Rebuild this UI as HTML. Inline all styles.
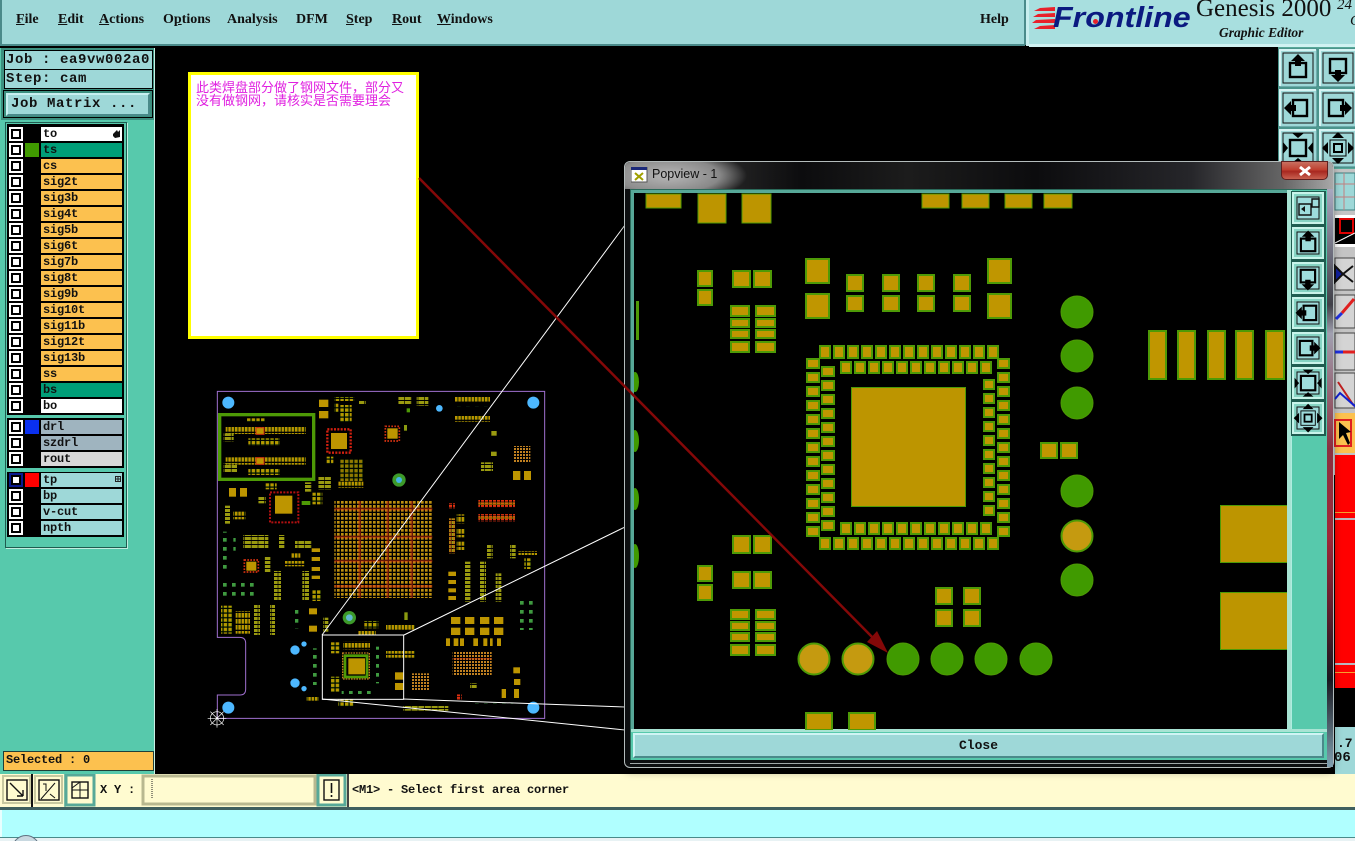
<!DOCTYPE html>
<html style="overflow:hidden;height:841px"><head><meta charset="utf-8"><title>Genesis 2000</title>
<style>
html,body{margin:0;padding:0;background:#000}
body{position:relative;width:1355px;height:841px;overflow:hidden;font-family:"Liberation Mono",monospace}
div,span,svg{position:absolute}
span.u{position:static;text-decoration:underline}
.m{top:12px;font:bold 14px/16px "Liberation Serif",serif;color:#111;white-space:nowrap}
.mono{font:bold 14px/19px "Liberation Mono",monospace;letter-spacing:.6px;color:#111;white-space:pre}
.c{left:9px;width:14px;height:14px;background:#fff}
.c:after{content:"";position:absolute;left:2px;top:2px;width:6px;height:6px;border:2px solid #000;background:#fff}
.s{left:25px;width:14px;height:14px}
.n{left:41px;width:79px;height:14px;padding-left:2px;font:bold 12px/14px "Liberation Mono",monospace;letter-spacing:-.2px;color:#111;white-space:pre}
.o{background:#fcc14f}
.t{background:#9ed8d8}
.g{background:#9fb4bf}
.p{fill:#c09600;stroke:#4e9a06;stroke-width:2}
.q{fill:#bd9500;stroke:#4e9a06;stroke-width:1}
.d{fill:#409a00;stroke:#4e9a06}
.e{fill:#c59a10;stroke:#4e9a06;stroke-width:2}
</style></head><body>

<!-- menu bar -->
<div style="left:0;top:0;width:1025px;height:44px;background:#9ed8d8;border-bottom:2px solid #4a8a8a"></div>
<div style="left:0;top:0;width:2px;height:44px;background:#4a8a8a"></div>
<div style="left:1024px;top:0;width:2px;height:45px;background:#4a8a8a"></div>
<div style="left:1026px;top:0;width:3px;height:46px;background:#c8eeee"></div>
<div style="left:1029px;top:0;width:326px;height:44px;background:#a8dfdf;border-bottom:3px solid #d0f2f2"></div>
<div class="m" style="left:16px"><span class="u">F</span>ile</div>
<div class="m" style="left:58px"><span class="u">E</span>dit</div>
<div class="m" style="left:99px"><span class="u">A</span>ctions</div>
<div class="m" style="left:163px">O<span class="u">p</span>tions</div>
<div class="m" style="left:227px">Analysis</div>
<div class="m" style="left:296px">DFM</div>
<div class="m" style="left:346px"><span class="u">S</span>tep</div>
<div class="m" style="left:392px"><span class="u">R</span>out</div>
<div class="m" style="left:437px"><span class="u">W</span>indows</div>
<div class="m" style="left:980px">Help</div>

<!-- logo -->
<svg style="left:1032px;top:5px" width="24" height="26"><g fill="#e8202a"><polygon points="8,3 23,2 23,6 2,6"/><polygon points="6,9 23,8 23,12 1,12"/><polygon points="4,15 23,14 23,18 0,18"/><polygon points="8,21 23,20 23,24 2,24"/></g></svg>
<div style="left:1053px;top:0;font:italic bold 29px/37px 'Liberation Sans',sans-serif;color:#0b1a80;white-space:nowrap;transform:scaleX(1.11);transform-origin:0 0">Frontline</div>
<div style="left:1093px;top:19px;width:5px;height:5px;background:#e8202a;border-radius:50%"></div>
<div style="left:1196px;top:-5px;font:25px/28px 'Liberation Serif',serif;color:#111;white-space:nowrap">Genesis 2000</div>
<div style="left:1337px;top:-3px;font:italic 15px/16px 'Liberation Serif',serif;color:#111">24</div>
<div style="left:1350px;top:13px;font:italic 15px/16px 'Liberation Serif',serif;color:#111">C</div>
<div style="left:1219px;top:25px;font:italic bold 13.5px/16px 'Liberation Serif',serif;color:#111;white-space:nowrap">Graphic Editor</div>

<!-- left panel -->
<div style="left:0;top:48px;width:154px;height:726px;background:#57c9ac;border-right:1px solid #c8f0e4"></div>
<div style="left:1px;top:48px;width:153px;height:72px;background:#3c8f7f"></div>
<div class="mono t" style="left:4px;top:50px;width:146px;height:18px;border:1px solid #000;padding-left:1px">Job : ea9vw002a0</div>
<div class="mono t" style="left:4px;top:69px;width:146px;height:18px;border:1px solid #000;padding-left:1px">Step: cam</div>
<div style="left:3px;top:90px;width:148px;height:26px;background:#3c8f7f;border:1px solid #000"></div>
<div class="mono t" style="left:6px;top:93px;width:137px;height:19px;line-height:18px;padding-left:3px;border:2px solid;border-color:#c8f0f0 #4a8a8a #4a8a8a #c8f0f0">Job Matrix ...</div>

<!-- layers list -->
<div style="left:5px;top:122px;width:120px;height:424px;background:#57c9ac;border:1px solid #1f5c50;box-shadow:1px 1px 0 #c0eee0"></div>
<div style="left:7px;top:124px;width:117px;height:291px;background:#000"></div>
<div style="left:7px;top:418px;width:117px;height:50px;background:#000"></div>
<div style="left:7px;top:472px;width:117px;height:65px;background:#000"></div>

<div class="c" style="top:127px"></div><div class="n" style="top:127px;background:#fff">to</div>
<svg style="left:112px;top:129px" width="9" height="10"><polygon points="1,5 5,1 6,3 8,1 8,8 3,9 1,7" fill="#111"/></svg>
<div class="c" style="top:143px"></div><div class="s" style="top:143px;background:#409a00"></div><div class="n" style="top:143px;background:#009e78">ts</div>
<div class="c" style="top:159px"></div><div class="n o" style="top:159px">cs</div>
<div class="c" style="top:175px"></div><div class="n o" style="top:175px">sig2t</div>
<div class="c" style="top:191px"></div><div class="n o" style="top:191px">sig3b</div>
<div class="c" style="top:207px"></div><div class="n o" style="top:207px">sig4t</div>
<div class="c" style="top:223px"></div><div class="n o" style="top:223px">sig5b</div>
<div class="c" style="top:239px"></div><div class="n o" style="top:239px">sig6t</div>
<div class="c" style="top:255px"></div><div class="n o" style="top:255px">sig7b</div>
<div class="c" style="top:271px"></div><div class="n o" style="top:271px">sig8t</div>
<div class="c" style="top:287px"></div><div class="n o" style="top:287px">sig9b</div>
<div class="c" style="top:303px"></div><div class="n o" style="top:303px">sig10t</div>
<div class="c" style="top:319px"></div><div class="n o" style="top:319px">sig11b</div>
<div class="c" style="top:335px"></div><div class="n o" style="top:335px">sig12t</div>
<div class="c" style="top:351px"></div><div class="n o" style="top:351px">sig13b</div>
<div class="c" style="top:367px"></div><div class="n o" style="top:367px">ss</div>
<div class="c" style="top:383px"></div><div class="n" style="top:383px;background:#009e78">bs</div>
<div class="c" style="top:399px"></div><div class="n" style="top:399px;background:#fff">bo</div>

<div class="c" style="top:420px"></div><div class="s" style="top:420px;background:#0a30f0"></div><div class="n g" style="top:420px">drl</div>
<div class="c" style="top:436px"></div><div class="n g" style="top:436px">szdrl</div>
<div class="c" style="top:452px"></div><div class="n" style="top:452px;background:#d8d8d8">rout</div>

<div class="c" style="top:473px;background:#0a1a90"></div><div class="s" style="top:473px;background:#f00"></div><div class="n t" style="top:473px">tp</div>
<svg style="left:115px;top:476px" width="7" height="7"><rect x=".5" y=".5" width="5" height="5" fill="none" stroke="#222"/><path d="M3 0v6M0 3h6" stroke="#222"/></svg>
<div class="c" style="top:489px"></div><div class="n t" style="top:489px">bp</div>
<div class="c" style="top:505px"></div><div class="n t" style="top:505px">v-cut</div>
<div class="c" style="top:521px"></div><div class="n t" style="top:521px">npth</div>

<div style="left:3px;top:751px;width:147px;height:18px;background:#fcc14f;border:1px solid #1f3f38;font:bold 12px/17px 'Liberation Mono',monospace;letter-spacing:-.2px;color:#111;padding-left:2px;white-space:pre">Selected : 0</div>

<!-- top-right toolbar -->
<svg style="left:1278px;top:47px" width="77" height="428" viewBox="0 0 77 428">
<defs>
<g id="b"><rect x="0" y="0" width="38" height="38" fill="#9ed8d8" stroke="#3f7f7f"/><path d="M1 37V1H37" fill="none" stroke="#d6f4f4" stroke-width="2"/><rect x="4" y="4" width="30" height="30" fill="none" stroke="#111"/></g>
<g id="up"><rect x="11" y="14" width="16" height="14" fill="none" stroke="#000" stroke-width="2.4"/><polygon points="19,5 26,12 22,12 22,17 16,17 16,12 12,12" fill="#000"/></g>
<g id="in"><rect x="11" y="11" width="16" height="16" fill="none" stroke="#000" stroke-width="2.4"/><path d="M13 4h12l-6 5zM13 34h12l-6-5zM4 13v12l5-6zM34 13v12l-5-6z" fill="#000"/></g>
<g id="out"><rect x="15" y="15" width="8" height="8" fill="none" stroke="#000" stroke-width="2"/><rect x="11" y="11" width="16" height="16" fill="none" stroke="#000"/><path d="M19 3l6 6H13zM19 35l6-6H13zM3 19l6-6v12zM35 19l-6-6v12z" fill="#000"/></g>
</defs>
<rect x="0" y="0" width="77" height="428" fill="#57a898"/>
<use href="#b" x="1" y="2"/><use href="#up" x="1" y="2"/>
<use href="#b" x="41" y="2"/><use href="#up" transform="translate(41,2) rotate(180 19 19)"/>
<use href="#b" x="1" y="42"/><use href="#up" transform="translate(1,42) rotate(-90 19 19)"/>
<use href="#b" x="41" y="42"/><use href="#up" transform="translate(41,42) rotate(90 19 19)"/>
<use href="#b" x="1" y="82"/><use href="#in" x="1" y="82"/>
<use href="#b" x="41" y="82"/><use href="#out" x="41" y="82"/>
<rect x="1" y="122" width="76" height="306" fill="#c4c4c4"/>
<rect x="57" y="126" width="20" height="37" fill="#9ed8d8" stroke="#3f7f7f"/><path d="M57 137h20M57 150h20M66 126v37" stroke="#c08080"/>
<rect x="57" y="168" width="20" height="32" fill="#fff"/><rect x="57" y="171" width="20" height="26" fill="#000"/><rect x="62" y="172" width="13" height="14" fill="none" stroke="#e00000" stroke-width="2"/><path d="M57 196l20-10" stroke="#fff"/>
<rect x="57" y="211" width="20" height="32" fill="#d4d4d4" stroke="#444"/><path d="M57 219l8 8-8 8zM65 227l10-8M65 227l10 8" fill="#1020a0" stroke="#111" stroke-width="2"/>
<rect x="57" y="248" width="20" height="33" fill="#d4d4d4" stroke="#444"/><path d="M58 272l6-6" stroke="#2030e0" stroke-width="3"/><path d="M64 266l12-14" stroke="#e02020" stroke-width="3"/>
<rect x="57" y="286" width="20" height="37" fill="#d4d4d4" stroke="#444"/><path d="M57 305h8" stroke="#2030e0" stroke-width="3"/><path d="M65 305h12" stroke="#e02020" stroke-width="3"/>
<rect x="57" y="326" width="20" height="35" fill="#d4d4d4" stroke="#444"/><path d="M60 335l16 24" stroke="#c02020" stroke-width="2" fill="none"/><path d="M57 352l5-6 16 14" stroke="#1020d0" stroke-width="2" fill="none"/>
<rect x="57" y="366" width="20" height="40" fill="#fcc14f"/><rect x="57" y="373" width="16" height="26" fill="none" stroke="#e02020" stroke-width="2"/><polygon points="61,375 61,392 65,388 70,398 72,396 68,386 73,385" fill="#000"/>
<rect x="57" y="408" width="20" height="20" fill="#f00"/>
</svg>
<div style="left:1335px;top:475px;width:20px;height:213px;background:#f00"></div>
<div style="left:1335px;top:512px;width:20px;height:1px;background:#f5a030"></div>
<div style="left:1335px;top:518px;width:20px;height:2px;background:#b8b8c0"></div>
<div style="left:1335px;top:663px;width:20px;height:2px;background:#b8b8c0"></div>
<div style="left:1335px;top:672px;width:20px;height:1px;background:#f5a030"></div>
<div style="left:1335px;top:727px;width:20px;height:47px;background:#9ed8d8"></div>
<div style="left:1337px;top:736px;font:bold 13px/15px 'Liberation Mono',monospace;color:#111">.7</div>
<div style="left:1334px;top:750px;font:bold 14px/16px 'Liberation Mono',monospace;color:#111">06</div>

<!-- bottom bars -->
<div style="left:0;top:774px;width:1355px;height:33px;background:#fffbd0"></div>
<svg style="left:0;top:774px" width="352" height="33" viewBox="0 0 352 33">
<rect x="31" y="0" width="2" height="33" fill="#111"/><rect x="64" y="0" width="2" height="33" fill="#9ed0b0"/>
<rect x="3" y="2" width="27" height="27" fill="none" stroke="#c8c8a0" stroke-width="2"/><rect x="7" y="6" width="20" height="20" fill="none" stroke="#111" stroke-width="1.4"/><path d="M10 9l13 13M23 22v-6M23 22h-6" stroke="#111" stroke-width="1.4" fill="none"/>
<rect x="35" y="2" width="27" height="27" fill="none" stroke="#c8c8a0" stroke-width="2"/><rect x="39" y="6" width="20" height="20" fill="none" stroke="#111" stroke-width="1.4"/><path d="M41 25l14-16M43 10h3v7M50 20l5 4" stroke="#111" fill="none"/>
<rect x="66" y="1" width="28" height="30" fill="#fffbd0" stroke="#57a898" stroke-width="3"/><rect x="72" y="8" width="16" height="16" fill="none" stroke="#111" stroke-width="1.4"/><path d="M72 16h16M80 8v16M72 14l8-6" stroke="#111" fill="none"/>
<rect x="143" y="2" width="172" height="28" fill="#fffbd0" stroke="#b8b890" stroke-width="3"/>
<path d="M152 5v20" stroke="#222" stroke-dasharray="1 1"/>
<rect x="318" y="1" width="27" height="30" fill="#fffbd0" stroke="#57a898" stroke-width="3"/><rect x="324" y="6" width="15" height="20" fill="none" stroke="#111" stroke-width="1.4"/><path d="M331.5 9v10M331.5 21v2" stroke="#111" stroke-width="1.6"/>
<rect x="347" y="0" width="2" height="33" fill="#444"/>
</svg>
<div class="n" style="left:98px;top:783px;width:40px;background:none;font-size:12px">X Y :</div>
<div class="n" style="left:350px;top:783px;width:300px;background:none;font-size:12px">&lt;M1&gt; - Select first area corner</div>
<div style="left:0;top:807px;width:1355px;height:3px;background:#3f5f5f"></div>
<div style="left:0;top:810px;width:1355px;height:27px;background:#b0ffff;border-bottom:1px solid #4a8a8a"></div>
<div style="left:0;top:810px;width:2px;height:27px;background:#e8ffff"></div>
<div style="left:0;top:838px;width:1355px;height:3px;background:#e8f2f4;overflow:hidden"></div>
<div style="left:0;top:835px;width:60px;height:6px;overflow:hidden"><div style="left:12px;top:0;width:28px;height:28px;border-radius:50%;background:#c8d8e0;border:1px solid #607080;box-sizing:border-box"></div></div>

<!-- sticky note -->
<div style="left:188px;top:72px;width:225px;height:261px;background:#fff;border:3px solid #ff0"></div>
<div style="left:196px;top:80px;width:216px;font:13px/13px 'Noto Sans CJK SC','WenQuanYi Zen Hei',sans-serif;color:#e020e0">此类焊盘部分做了钢网文件，部分又<br>没有做钢网，请核实是否需要理会</div>

<!-- board -->
<svg style="left:205px;top:385px" width="350" height="345" viewBox="0 0 1050 1035">
<defs>
<pattern id="a" width="14" height="14" patternUnits="userSpaceOnUse"><rect width="10" height="10" fill="#bd9500" stroke="#4e9a06" stroke-width="1"/></pattern>
<pattern id="h" width="10" height="18" patternUnits="userSpaceOnUse"><rect width="7" height="14" fill="#bd9500"/><rect x="7" width="1" height="14" fill="#4e9a06"/></pattern>
<pattern id="v" width="20" height="12" patternUnits="userSpaceOnUse"><rect width="18" height="9" fill="#9a9a10"/></pattern>
<pattern id="k" width="27" height="27" patternUnits="userSpaceOnUse"><rect width="11" height="11" fill="#3f9a40"/></pattern>
<pattern id="n" width="12" height="12" patternUnits="userSpaceOnUse"><rect width="8" height="8" fill="#bd8f10"/></pattern>
<pattern id="r" width="12" height="8" patternUnits="userSpaceOnUse"><rect width="9" height="6" fill="#e03010"/></pattern>
<pattern id="z" width="9" height="9" patternUnits="userSpaceOnUse"><rect width="6" height="6" fill="#c08020"/></pattern>
</defs>
<path d="M37 19H1019V1000H37V930H105Q122 930 122 912V775Q122 757 104 757H37Z" fill="none" stroke="#a070d0" stroke-width="3"/>
<g fill="#4db8ff"><circle cx="70" cy="53" r="18"/><circle cx="985" cy="53" r="18"/><circle cx="70" cy="968" r="18"/><circle cx="985" cy="968" r="18"/><circle cx="703" cy="70" r="10"/><circle cx="270" cy="795" r="14"/><circle cx="297" cy="777" r="8"/><circle cx="270" cy="894" r="14"/><circle cx="297" cy="911" r="8"/></g>
<rect x="44" y="89" width="282" height="194" fill="none" stroke="#4e9a06" stroke-width="10"/>
<g>
<rect x="62" y="125" width="240" height="22" fill="url(#h)"/><rect x="125" y="100" width="55" height="10" fill="url(#a)"/><rect x="130" y="160" width="95" height="22" fill="url(#a)"/><rect x="56" y="145" width="30" height="24" fill="url(#v)"/>
<rect x="62" y="217" width="240" height="22" fill="url(#h)"/><rect x="130" y="250" width="95" height="20" fill="url(#a)"/><rect x="56" y="235" width="40" height="28" fill="url(#v)"/>
<rect x="153" y="128" width="24" height="20" fill="#bd9500" stroke="#d03010" stroke-width="3"/><rect x="153" y="218" width="24" height="20" fill="#bd9500" stroke="#d03010" stroke-width="3"/>
</g>
<rect x="367" y="133" width="70" height="70" fill="none" stroke="#d02010" stroke-width="7" stroke-dasharray="6 4"/><rect x="378" y="144" width="48" height="48" fill="#bd9500"/>
<rect x="195" y="322" width="85" height="90" fill="none" stroke="#b01010" stroke-width="6" stroke-dasharray="6 4"/><rect x="210" y="332" width="52" height="54" fill="#bd9500"/>
<rect x="541" y="124" width="42" height="44" fill="none" stroke="#d03010" stroke-width="5" stroke-dasharray="5 4"/><rect x="547" y="130" width="31" height="31" fill="#bd9500"/>
<rect x="118" y="525" width="42" height="36" fill="none" stroke="#d03010" stroke-width="5" stroke-dasharray="5 4"/><rect x="124" y="530" width="30" height="27" fill="#bd9500"/>
<rect x="388" y="348" width="294" height="291" fill="url(#n)"/>
<g fill="#e03010" opacity=".45"><rect x="388" y="368" width="294" height="8"/><rect x="388" y="452" width="294" height="8"/><rect x="388" y="524" width="294" height="8"/><rect x="388" y="600" width="294" height="8"/><rect x="460" y="348" width="8" height="291"/><rect x="544" y="348" width="8" height="291"/><rect x="616" y="348" width="8" height="291"/></g>
<circle cx="582" cy="285" r="20" fill="#3d9a2a"/><circle cx="582" cy="285" r="9" fill="#45b4e8"/><circle cx="433" cy="698" r="20" fill="#3d9a2a"/><circle cx="433" cy="698" r="10" fill="#60b8d0"/>
<g fill="#bd9500">
<rect x="342" y="44" width="28" height="22"/><rect x="342" y="78" width="28" height="22"/><rect x="72" y="309" width="21" height="26"/><rect x="105" y="309" width="21" height="26"/><rect x="924" y="258" width="22" height="27"/><rect x="957" y="258" width="21" height="27"/><rect x="312" y="670" width="24" height="18"/><rect x="312" y="722" width="24" height="18"/><rect x="320" y="490" width="25" height="11"/><rect x="320" y="516" width="25" height="12"/><rect x="320" y="546" width="25" height="12"/><rect x="320" y="572" width="25" height="10"/><rect x="730" y="560" width="23" height="13"/><rect x="730" y="585" width="23" height="12"/><rect x="730" y="610" width="23" height="12"/><rect x="730" y="633" width="23" height="12"/><rect x="570" y="862" width="25" height="22"/><rect x="570" y="894" width="25" height="21"/><rect x="925" y="847" width="20" height="18"/><rect x="927" y="882" width="19" height="18"/><rect x="890" y="912" width="13" height="27"/><rect x="927" y="912" width="15" height="27"/>
<rect x="738" y="696" width="28" height="21"/><rect x="780" y="696" width="28" height="21"/><rect x="825" y="696" width="28" height="21"/><rect x="867" y="696" width="28" height="21"/><rect x="738" y="728" width="28" height="22"/><rect x="780" y="728" width="28" height="22"/><rect x="825" y="728" width="28" height="22"/><rect x="867" y="728" width="28" height="22"/>
<rect x="723" y="760" width="12" height="23"/><rect x="746" y="760" width="14" height="23"/><rect x="765" y="760" width="12" height="23"/><rect x="805" y="760" width="14" height="23"/><rect x="835" y="760" width="12" height="23"/><rect x="855" y="760" width="8" height="23"/><rect x="876" y="760" width="12" height="23"/>
<rect x="420" y="812" width="66" height="64" fill="none" stroke="#4e9a06" stroke-width="8"/><rect x="430" y="820" width="50" height="48"/>
</g>
<rect x="413" y="804" width="80" height="78" fill="none" stroke="#c08020" stroke-width="4" stroke-dasharray="5 3"/>
<g>
<rect x="750" y="33" width="105" height="17" fill="url(#h)"/><rect x="750" y="93" width="105" height="17" fill="url(#h)"/>
<rect x="820" y="345" width="110" height="22" fill="url(#r)"/><rect x="820" y="387" width="110" height="22" fill="url(#r)"/><rect x="820" y="352" width="110" height="8" fill="#bd9500" opacity=".5"/><rect x="820" y="394" width="110" height="8" fill="#bd9500" opacity=".5"/>
<rect x="926" y="183" width="50" height="50" fill="url(#z)"/><rect x="743" y="798" width="117" height="74" fill="url(#z)"/><rect x="743" y="820" width="117" height="3" fill="#d03010" opacity=".7"/><rect x="620" y="865" width="52" height="50" fill="url(#z)"/>
<rect x="388" y="36" width="60" height="12" fill="url(#a)"/><rect x="388" y="55" width="12" height="26" fill="url(#a)"/><rect x="405" y="60" width="35" height="50" fill="url(#a)"/><rect x="462" y="45" width="20" height="13" fill="url(#v)"/><rect x="580" y="36" width="40" height="24" fill="url(#v)"/><rect x="635" y="36" width="35" height="26" fill="url(#v)"/><rect x="605" y="70" width="10" height="12" fill="#4e9a06"/><rect x="597" y="120" width="9" height="17" fill="#8a9a10"/>
<rect x="859" y="138" width="16" height="14" fill="#9a9a10"/><rect x="858" y="200" width="17" height="13" fill="#9a9a10"/><rect x="828" y="232" width="36" height="26" fill="url(#v)"/><rect x="750" y="65" width="100" height="12" fill="url(#k)"/>
<rect x="365" y="215" width="20" height="20" fill="url(#a)"/><rect x="405" y="222" width="70" height="66" fill="url(#a)" opacity=".8"/><rect x="400" y="290" width="75" height="18" fill="url(#h)"/><rect x="340" y="275" width="38" height="38" fill="url(#v)"/><rect x="300" y="292" width="20" height="28" fill="url(#v)"/><rect x="322" y="323" width="30" height="35" fill="url(#a)"/><rect x="160" y="335" width="22" height="20" fill="url(#v)"/><rect x="180" y="295" width="35" height="18" fill="url(#a)"/><rect x="290" y="348" width="26" height="12" fill="#4e9a06"/>
<rect x="732" y="355" width="18" height="15" fill="url(#r)"/><rect x="732" y="400" width="18" height="105" fill="url(#v)"/><rect x="732" y="400" width="18" height="105" fill="url(#r)" opacity=".4"/><rect x="755" y="388" width="25" height="27" fill="url(#h)"/><rect x="755" y="430" width="25" height="27" fill="url(#h)"/><rect x="755" y="470" width="25" height="25" fill="url(#h)"/>
<rect x="846" y="480" width="17" height="40" fill="url(#v)"/><rect x="915" y="480" width="17" height="40" fill="url(#v)"/><rect x="940" y="498" width="56" height="12" fill="url(#h)"/><rect x="958" y="520" width="20" height="32" fill="url(#a)"/>
<rect x="780" y="530" width="16" height="120" fill="url(#v)"/><rect x="825" y="530" width="18" height="120" fill="url(#v)"/><rect x="872" y="565" width="17" height="85" fill="url(#v)"/>
<rect x="945" y="635" width="40" height="100" fill="url(#k)"/><rect x="985" y="795" width="14" height="123" fill="url(#k)"/>
<rect x="60" y="362" width="15" height="54" fill="url(#v)"/><rect x="85" y="380" width="36" height="23" fill="url(#h)"/>
<rect x="52" y="440" width="14" height="125" fill="url(#k)"/><rect x="85" y="445" width="15" height="55" fill="url(#k)"/><rect x="115" y="450" width="75" height="40" fill="url(#v)"/><rect x="222" y="450" width="18" height="42" fill="url(#v)"/><rect x="270" y="465" width="50" height="25" fill="url(#v)"/><rect x="240" y="528" width="58" height="16" fill="url(#h)"/><rect x="258" y="505" width="28" height="14" fill="url(#h)"/><rect x="178" y="513" width="18" height="50" fill="url(#v)"/>
<rect x="207" y="558" width="21" height="88" fill="url(#v)"/><rect x="292" y="558" width="20" height="88" fill="url(#v)"/><rect x="322" y="615" width="25" height="33" fill="url(#a)"/>
<rect x="52" y="590" width="100" height="55" fill="url(#k)"/><rect x="48" y="662" width="34" height="84" fill="url(#a)"/><rect x="92" y="678" width="43" height="68" fill="url(#h)"/>
<rect x="147" y="660" width="18" height="90" fill="url(#v)"/><rect x="195" y="660" width="15" height="90" fill="url(#v)"/><rect x="230" y="665" width="11" height="80" fill="url(#k)"/><rect x="268" y="660" width="12" height="70" fill="url(#k)"/>
<rect x="355" y="698" width="15" height="42" fill="url(#v)"/><rect x="543" y="717" width="87" height="20" fill="url(#h)"/><rect x="460" y="738" width="52" height="12" fill="url(#h)"/><rect x="478" y="708" width="42" height="22" fill="url(#a)"/><rect x="598" y="682" width="10" height="23" fill="#8a9a10"/>
<rect x="543" y="798" width="87" height="20" fill="url(#h)"/><rect x="320" y="790" width="32" height="110" fill="url(#k)"/><rect x="375" y="772" width="30" height="33" fill="url(#a)"/><rect x="375" y="875" width="30" height="45" fill="url(#a)"/><rect x="415" y="770" width="80" height="23" fill="url(#h)"/><rect x="500" y="785" width="22" height="110" fill="url(#k)"/>
<rect x="410" y="915" width="95" height="12" fill="url(#k)"/><rect x="305" y="933" width="36" height="14" fill="url(#h)"/><rect x="400" y="942" width="45" height="23" fill="url(#a)"/>
<rect x="595" y="963" width="135" height="14" fill="url(#v)"/><rect x="800" y="955" width="125" height="15" fill="url(#k)"/><rect x="795" y="895" width="20" height="16" fill="url(#v)"/><rect x="753" y="928" width="17" height="17" fill="url(#r)"/>
</g>
<g stroke="#fff" stroke-width="2" fill="none"><circle cx="36" cy="1000" r="20"/><path d="M8 1000H64M36 972V1028M16 980L56 1020M56 980L16 1020"/></g>
<rect x="352" y="750" width="244" height="193" fill="none" stroke="#fff" stroke-width="3"/>
</svg>

<!-- leader lines -->
<svg style="left:0;top:0" width="640" height="780"><g stroke="#fff" stroke-width="1"><path d="M322 635L625 225M404 635L625 527M403 699L625 707M322 699L625 730"/></g></svg>

<!-- popup window: dark glass frame over black -->
<div style="left:624px;top:161px;width:710px;height:607px;background:#0c0e10;border:1px solid #b4bcbc;border-radius:6px;box-sizing:border-box;box-shadow:0 4px 8px rgba(0,0,0,.35)"></div>
<div style="left:625px;top:162px;width:708px;height:27px;border-radius:5px 5px 0 0;background:radial-gradient(ellipse 78px 26px at 44px 50%,rgba(190,190,190,.95) 0,rgba(160,160,160,.8) 65%,rgba(110,110,110,0) 100%),linear-gradient(90deg,#4a4a4a 0,#2a2a2a 12%,#0c0c0e 25%,#1c1c1c 40%,#0c0c0e 58%,#26262a 80%,#666 93%,#a8a8a8 100%)"></div>
<div style="left:1327px;top:189px;width:6px;height:578px;background:linear-gradient(180deg,#a8a8c0 0,#404048 20%,#a0a0b0 25%,#8a3040 45%,#a02838 60%,#702030 70%,#181820 85%,#80a0b0 100%)"></div>
<div style="left:630px;top:763px;width:697px;height:1px;background:#a0a8a8"></div>
<svg style="left:631px;top:167px" width="17" height="16"><rect width="16" height="15" fill="#fff" stroke="#555"/><rect x="0" y="0" width="16" height="3" fill="#1c2a7a"/><path d="M4 6l8 7M12 6l-8 7" stroke="#a0a000" stroke-width="2"/></svg>
<div style="left:652px;top:167px;font:12.5px/15px 'Liberation Sans',sans-serif;color:#111;white-space:nowrap">Popview - 1</div>
<div style="left:1281px;top:161px;width:47px;height:19px;border-radius:0 0 5px 5px;background:linear-gradient(180deg,#c87060 0,#c04030 45%,#a82820 55%,#c86050 100%);border:1px solid #602020;box-sizing:border-box"></div>
<svg style="left:1298px;top:165px" width="14" height="12"><path d="M2 2l10 8M12 2L2 10" stroke="#fff" stroke-width="3"/></svg>

<div style="left:630px;top:189px;width:697px;height:571px;background:#57a898;border:1px solid #2a6a5a;box-sizing:border-box"></div>
<div style="left:634px;top:193px;width:653px;height:537px;background:#000"></div>
<div style="left:1291px;top:190px;width:36px;height:540px;background:#57c9ac;border-left:1px solid #b0ece0;box-sizing:border-box"></div>
<div style="left:1287px;top:190px;width:4px;height:541px;background:#a8e4d4"></div>
<div style="left:631px;top:729px;width:696px;height:31px;background:#57c9ac;border-top:3px solid #a8e4d4;box-sizing:border-box"></div>
<div style="left:633px;top:733px;width:687px;height:21px;background:#9ed8d8;border:2px solid;border-color:#d0f4f4 #4a8a8a #4a8a8a #d0f4f4;font:bold 13px/21px 'Liberation Mono',monospace;color:#111;text-align:center">Close</div>

<!-- popup pads -->
<svg style="left:634px;top:193px" width="653" height="537" viewBox="634 193 653 537">
<defs>
<pattern id="t1" x="819" y="345" width="14" height="14" patternUnits="userSpaceOnUse"><rect x="1" y="1" width="10" height="12" class="p"/></pattern>
<pattern id="t2" x="840" y="361" width="14" height="14" patternUnits="userSpaceOnUse"><rect x="1" y="1" width="10" height="11" class="p"/></pattern>
<pattern id="t3" x="840" y="522" width="14" height="14" patternUnits="userSpaceOnUse"><rect x="1" y="1" width="10" height="11" class="p"/></pattern>
<pattern id="t4" x="819" y="537" width="14" height="14" patternUnits="userSpaceOnUse"><rect x="1" y="1" width="10" height="11" class="p"/></pattern>
<pattern id="l1" x="806" y="358" width="14" height="14" patternUnits="userSpaceOnUse"><rect x="1" y="1" width="12" height="9" class="p"/></pattern>
<pattern id="l2" x="821" y="366" width="14" height="14" patternUnits="userSpaceOnUse"><rect x="1" y="1" width="12" height="9" class="p"/></pattern>
<pattern id="r1" x="983" y="379" width="14" height="14" patternUnits="userSpaceOnUse"><rect x="1" y="1" width="10" height="9" class="p"/></pattern>
<pattern id="r2" x="997" y="358" width="14" height="14" patternUnits="userSpaceOnUse"><rect x="1" y="1" width="11" height="9" class="p"/></pattern>
</defs>
<g class="q">
<rect x="646" y="194" width="35" height="14"/><rect x="698" y="194" width="28" height="29"/><rect x="742" y="194" width="29" height="29"/>
<rect x="922" y="194" width="27" height="14"/><rect x="962" y="194" width="27" height="14"/><rect x="1005" y="194" width="27" height="14"/><rect x="1044" y="194" width="28" height="14"/>
<rect x="851.5" y="387.5" width="114" height="119"/>
<rect x="1220.5" y="505.5" width="67" height="57"/><rect x="1220.5" y="592.5" width="67" height="57"/>
</g>
<g class="p">
<rect x="698" y="271" width="14" height="15"/><rect x="698" y="290" width="14" height="15"/>
<rect x="733" y="271" width="17" height="16"/><rect x="754" y="271" width="17" height="16"/>
<rect x="806" y="259" width="23" height="24"/><rect x="806" y="294" width="23" height="24"/><rect x="988" y="259" width="23" height="24"/><rect x="988" y="294" width="23" height="24"/>
<rect x="847" y="275" width="16" height="16"/><rect x="847" y="296" width="16" height="15"/><rect x="883" y="275" width="16" height="16"/><rect x="883" y="296" width="16" height="15"/><rect x="918" y="275" width="16" height="16"/><rect x="918" y="296" width="16" height="15"/><rect x="954" y="275" width="16" height="16"/><rect x="954" y="296" width="16" height="15"/>
<rect x="731" y="306" width="18" height="10"/><rect x="731" y="319" width="18" height="8"/><rect x="731" y="330" width="18" height="8"/><rect x="731" y="342" width="18" height="10"/>
<rect x="756" y="306" width="19" height="10"/><rect x="756" y="319" width="19" height="8"/><rect x="756" y="330" width="19" height="8"/><rect x="756" y="342" width="19" height="10"/>
<rect x="731" y="610" width="18" height="9"/><rect x="731" y="622" width="18" height="8"/><rect x="731" y="633" width="18" height="8"/><rect x="731" y="645" width="18" height="10"/>
<rect x="756" y="610" width="19" height="9"/><rect x="756" y="622" width="19" height="8"/><rect x="756" y="633" width="19" height="8"/><rect x="756" y="645" width="19" height="10"/>
<rect x="733" y="536" width="17" height="17"/><rect x="754" y="536" width="17" height="17"/><rect x="733" y="572" width="17" height="16"/><rect x="754" y="572" width="17" height="16"/>
<rect x="698" y="566" width="14" height="15"/><rect x="698" y="585" width="14" height="15"/>
<rect x="1041" y="443" width="16" height="15"/><rect x="1061" y="443" width="16" height="15"/>
<rect x="936" y="588" width="16" height="16"/><rect x="964" y="588" width="16" height="16"/><rect x="936" y="610" width="16" height="16"/><rect x="964" y="610" width="16" height="16"/>
<rect x="1149" y="331" width="17" height="48"/><rect x="1178" y="331" width="17" height="48"/><rect x="1208" y="331" width="17" height="48"/><rect x="1236" y="331" width="17" height="48"/><rect x="1266" y="331" width="18" height="48"/>
<rect x="806" y="713" width="26" height="17"/><rect x="849" y="713" width="26" height="17"/>
</g>
<rect x="636" y="301" width="3" height="39" fill="#4e9a06"/>
<ellipse cx="635" cy="382" rx="4" ry="10" fill="#409a00"/><ellipse cx="635" cy="441" rx="4" ry="11" fill="#409a00"/><ellipse cx="635" cy="499" rx="4" ry="11" fill="#409a00"/><ellipse cx="635" cy="556" rx="4" ry="12" fill="#409a00"/>
<rect x="819" y="345" width="182" height="14" fill="url(#t1)"/>
<rect x="840" y="361" width="154" height="14" fill="url(#t2)"/>
<rect x="840" y="522" width="154" height="14" fill="url(#t3)"/>
<rect x="819" y="537" width="182" height="14" fill="url(#t4)"/>
<rect x="806" y="358" width="14" height="182" fill="url(#l1)"/>
<rect x="821" y="366" width="14" height="168" fill="url(#l2)"/>
<rect x="983" y="379" width="14" height="140" fill="url(#r1)"/>
<rect x="997" y="358" width="14" height="182" fill="url(#r2)"/>
<g class="d">
<circle cx="1077" cy="312" r="16"/><circle cx="1077" cy="356" r="16"/><circle cx="1077" cy="403" r="16"/><circle cx="1077" cy="491" r="16"/><circle cx="1077" cy="580" r="16"/>
<circle cx="903" cy="659" r="16"/><circle cx="947" cy="659" r="16"/><circle cx="991" cy="659" r="16"/><circle cx="1036" cy="659" r="16"/>
</g>
<g class="e"><circle cx="1077" cy="536" r="15.5"/><circle cx="814" cy="659" r="15.5"/><circle cx="858" cy="659" r="15.5"/></g>
</svg>

<!-- popup toolbar -->
<svg style="left:1291px;top:191px" width="35" height="250" viewBox="0 0 35 250">
<defs><g id="pb"><rect x=".5" y=".5" width="33" height="33" fill="#86d4c4" stroke="#1f5c50"/><rect x="2" y="2" width="30" height="30" fill="none" stroke="#c8f4ea" stroke-width="2"/><rect x="6" y="6" width="22" height="22" fill="#9edcdc" stroke="#111"/></g></defs>
<rect width="35" height="245" fill="#1f5c50"/>
<g id="x0"><use href="#pb" y="0"/><path d="M8 13h12v11H8zM21 8h7v8h-7z" fill="none" stroke="#111" stroke-width="1.4"/><path d="M10 18l4-3v6z" fill="#111"/></g>
<use href="#pb" y="35"/><use href="#pb" y="70"/><use href="#pb" y="105"/><use href="#pb" y="140"/><use href="#pb" y="175"/><use href="#pb" y="210"/>
<g transform="translate(0,35) scale(.9)"><use href="#up"/></g>
<g transform="translate(0,70) rotate(180 17 17) scale(.9)"><use href="#up"/></g>
<g transform="translate(0,105) rotate(-90 17 17) scale(.9)"><use href="#up"/></g>
<g transform="translate(0,140) rotate(90 17 17) scale(.9)"><use href="#up"/></g>
<g transform="translate(0,175) scale(.9)"><use href="#in"/></g>
<g transform="translate(0,210) scale(.9)"><use href="#out"/></g>
</svg>

<!-- red arrow on top -->
<svg style="left:0;top:0" width="1355" height="841"><path d="M419 178L878 643" stroke="#840808" stroke-width="2.5" fill="none"/><polygon points="888,653 867,642 877,631" fill="#840808"/></svg>
</body></html>
